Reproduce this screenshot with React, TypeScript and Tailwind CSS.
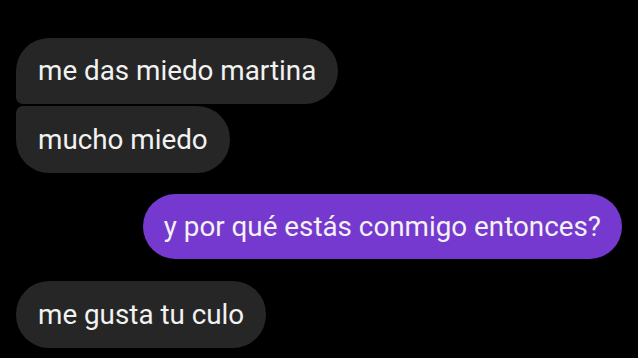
export default function App() {
  return (
    <div
      className="w-[638px] h-[358px] overflow-hidden bg-black flex flex-col pt-[38px] px-[16px] text-[#f2f2f2]"
      style={{ fontFamily: "Roboto, 'Noto Sans', sans-serif" }}
    >
      <div className="self-start h-[66px] flex items-center px-[22px] bg-[#262626] rounded-[33px] rounded-bl-[7px] text-[27.8px]">
        me das miedo martina
      </div>
      <div className="self-start mt-[2px] h-[67px] flex items-center px-[22px] bg-[#262626] rounded-[33px] rounded-tl-[7px] text-[27.8px]">
        mucho miedo
      </div>
      <div className="self-end mt-[21px] h-[65px] flex items-center px-[21px] bg-[#7539cf] rounded-[33px] text-[27.8px]">
        y por qué estás conmigo entonces?
      </div>
      <div className="self-start mt-[22px] h-[67px] flex items-center px-[22px] bg-[#262626] rounded-[33px] text-[27.8px]">
        me gusta tu culo
      </div>
    </div>
  );
}
